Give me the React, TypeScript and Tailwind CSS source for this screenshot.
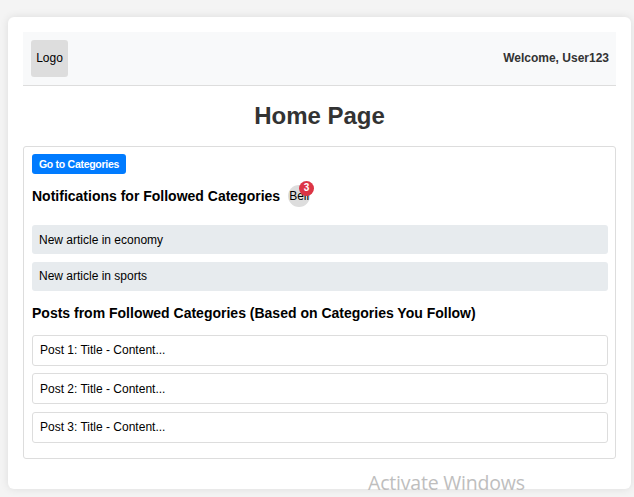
const notifications = [
  { text: "New article in economy", spacing: "pb-0" },
  { text: "New article in sports", spacing: "pb-[2px]" },
];
const posts = [
  { text: "Post 1: Title - Content...", spacing: "pb-[2px]" },
  { text: "Post 2: Title - Content...", spacing: "mt-[7px] pb-0" },
  { text: "Post 3: Title - Content...", spacing: "mt-2 pb-[2px]" },
];

function Header() {
  return (
    <header className="flex h-[54px] items-center justify-between border-b border-[#dddddd] bg-[#f8f9fa] pr-[7px] pl-2">
      <div className="flex size-[37px] items-center justify-center rounded-[3px] bg-[#dddddd] pb-[2px]">
        Logo
      </div>
      <span className="pb-[2px] font-bold text-[#333333]">Welcome, User123</span>
    </header>
  );
}

function Bell() {
  return (
    <div className="relative flex size-[22px] items-center justify-center rounded-full bg-[#dddddd]">
      <span>Bell</span>
      <span className="absolute -top-1 left-[11px] flex size-[15px] items-center justify-center rounded-full bg-[#dc3545] pb-[2px] text-[10px] leading-none font-bold text-white">
        3
      </span>
    </div>
  );
}

export default function App() {
  return (
    <div className="relative h-[497px] overflow-hidden bg-[#f4f4f4] pt-[17px] pr-[3px] pl-2 font-['Liberation_Sans',Arial,sans-serif] text-[12px] leading-[14px] text-black">
      <main className="h-[472px] rounded-[6px] bg-white p-[15px] shadow-[0_0_8px_rgba(0,0,0,0.1)]">
        <Header />
        <h1 className="mt-4 text-center text-[24px] leading-7 font-bold text-[#333333]">
          Home Page
        </h1>
        <section className="mt-4 h-[313px] rounded-[3px] border border-[#dddddd] pt-[7px] pr-[7px] pl-2">
          <button className="flex h-5 w-[94px] items-center justify-center rounded-[3px] bg-[#007bff] text-[10.5px] font-bold tracking-[-0.28px] whitespace-nowrap text-white">
            Go to Categories
          </button>
          <div className="mt-[11px] flex items-center gap-2">
            <h3 className="text-[14px] leading-4 font-bold">
              Notifications for Followed Categories
            </h3>
            <Bell />
          </div>
          <div className="mt-[18px] flex flex-col gap-2">
            {notifications.map(({ text, spacing }) => (
              <div key={text} className={`flex h-[29px] items-center rounded-[3px] bg-[#e7ebee] px-[7px] ${spacing}`}>
                {text}
              </div>
            ))}
          </div>
          <h3 className="mt-[14px] text-[14px] leading-4 font-bold">
            Posts from Followed Categories (Based on Categories You Follow)
          </h3>
          <div className="mt-[14px] flex flex-col">
            {posts.map(({ text, spacing }) => (
              <div key={text} className={`flex h-[31px] items-center rounded-[3px] border border-[#dddddd] px-[7px] ${spacing}`}>
                {text}
              </div>
            ))}
          </div>
        </section>
      </main>
      <div className="absolute top-[470px] left-[368px] font-['Open_Sans','Noto_Sans',sans-serif] text-[19.5px] leading-[26px] tracking-[-0.2px] whitespace-nowrap text-[#bebebe]">
        Activate Windows
      </div>
    </div>
  );
}
